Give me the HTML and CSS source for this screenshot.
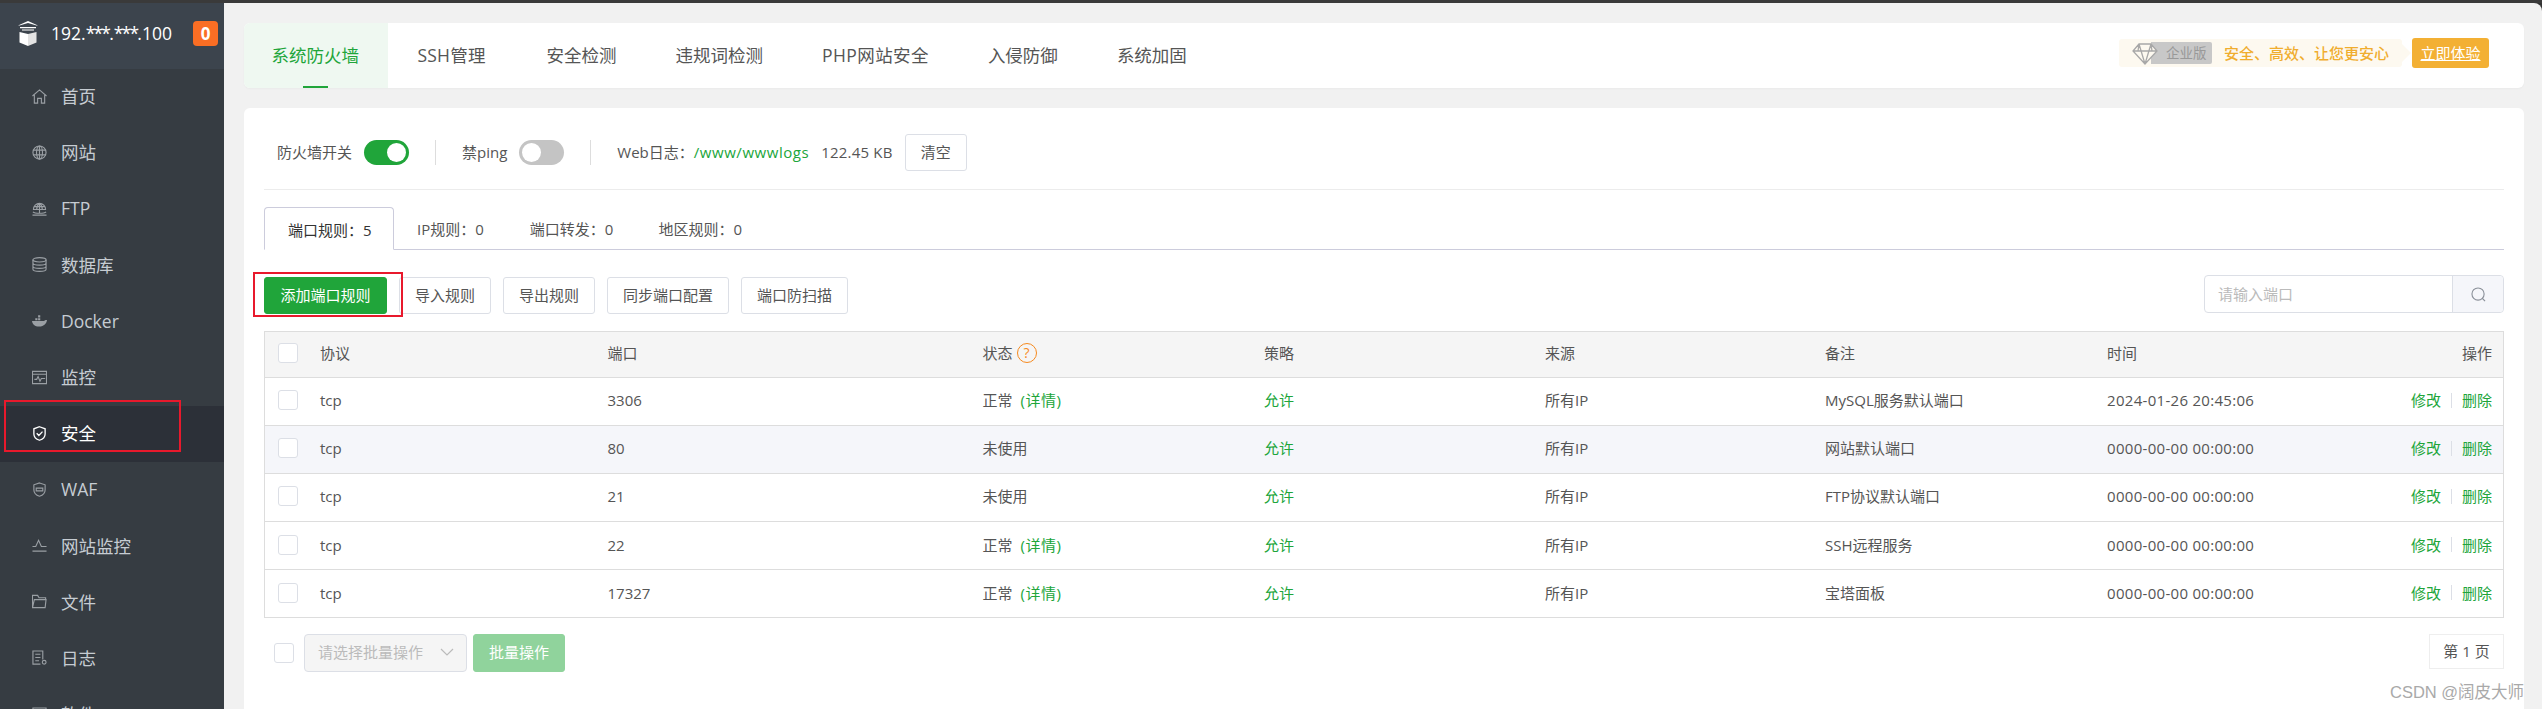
FILE: index.html
```html
<!DOCTYPE html>
<html lang="zh-CN">
<head>
  <meta charset="UTF-8" />
  <title>宝塔面板 - 安全</title>
  <link rel="stylesheet" href="styles.css">
</head>
<body>
  <div class="topbar"></div>
  <div class="layout">
    <aside class="sidebar">
      <div class="side-head">
        <svg class="logo" viewBox="0 0 22 25">
          <path d="M11 0 1 4.500h1.500L11 2l8.500 2.500H21zM3 6h16v1.300H3zM5 8.500h12v1H5z" fill="#fff"/>
          <path d="M2.500 11 11 13v12l-8.500-3.500z" fill="#fff"/>
          <path d="M19.500 11 11 13v12l8.500-3.500z" fill="#e3e3e3"/>
        </svg>
        <span class="ip">192.<span class="stars">***</span>.<span class="stars">***</span>.100</span>
        <span class="badge">0</span>
      </div>
      <nav class="menu">
        <a class="menu-item">
          <svg class="ico" viewBox="0 0 16 16"><path d="M.5 7.500 8 1l7.500 6.500M2.500 6.500V15h3.500v-5h4v5h3.500V6.500"/></svg>
          <span>首页</span>
        </a>
        <a class="menu-item">
          <svg class="ico" viewBox="0 0 16 16"><circle cx="8" cy="8" r="7"/><ellipse cx="8" cy="8" rx="3.200" ry="7"/><path d="M1 5.500h14M1 10.500h14M8 1v14"/></svg>
          <span>网站</span>
        </a>
        <a class="menu-item">
          <svg class="ico" viewBox="0 0 16 16"><path d="M1.500 9a6.500 6.500 0 1 1 13 0M1 9h14M8 2.500V13M5 9c0-3 1-5 3-6.500 2 1.500 3 3.500 3 6.500M2 6h12M1 11.500c1 1 2.500 1.500 7 1.500s6-.500 7-1.500M.5 15h15"/></svg>
          <span>FTP</span>
        </a>
        <a class="menu-item">
          <svg class="ico" viewBox="0 0 16 16"><ellipse cx="8" cy="3" rx="7" ry="2.300"/><path d="M1 3v10c0 1.300 3 2.300 7 2.300s7-1 7-2.300V3M1 6.400c0 1.300 3 2.300 7 2.300s7-1 7-2.300M1 9.800c0 1.300 3 2.300 7 2.300s7-1 7-2.300"/></svg>
          <span>数据库</span>
        </a>
        <a class="menu-item">
          <svg class="ico ico-fill" viewBox="0 0 16 16"><path d="M0 8.500h13c.500-1 1.500-1.300 3-1-.500 3.500-3 7-8.500 7C3 14.500.500 12 0 8.500z"/><path d="M3.500 5.500h2.300v2.300H3.500zM6.500 5.500h2.300v2.300H6.500zM6.500 2.500h2.300v2.300H6.500z"/></svg>
          <span>Docker</span>
        </a>
        <a class="menu-item">
          <svg class="ico" viewBox="0 0 16 16"><path d="M.5 1.500h15v13H.5zM.5 4.500h15M2.500 10h2.500l1.500-3 2 5 1.500-3h4"/></svg>
          <span>监控</span>
        </a>
        <a class="menu-item active">
          <svg class="ico" viewBox="0 0 16 16"><path d="M8 .8 14 3v5.500c0 3.500-3 5.700-6 6.700-3-1-6-3.200-6-6.700V3zM5 7.800l2.300 2.300L11.200 6"/></svg>
          <span>安全</span>
        </a>
        <a class="menu-item">
          <svg class="ico" viewBox="0 0 16 16"><path d="M8 1 14 3v5.500c0 3.500-3 5.700-6 6.700-3-1-6-3.200-6-6.700V3zM4.500 6.500h7v3h-7z"/></svg>
          <span>WAF</span>
        </a>
        <a class="menu-item">
          <svg class="ico" viewBox="0 0 16 16"><path d="M.5 9H4l3-6.500L10 9h5.500M.5 14h15"/></svg>
          <span>网站监控</span>
        </a>
        <a class="menu-item">
          <svg class="ico" viewBox="0 0 16 16"><path d="M.5 14.500V1.500H6l1.500 2.500h7v2M.5 14.500h13.500l1-8.500H2.500z"/></svg>
          <span>文件</span>
        </a>
        <a class="menu-item">
          <svg class="ico" viewBox="0 0 16 16"><path d="M11.500 10V1H1v14h8M3.500 4.500h5.500M3.500 8h5.500M3.500 11.500h4"/><circle cx="13" cy="13" r="2"/></svg>
          <span>日志</span>
        </a>
        <a class="menu-item">
          <svg class="ico" viewBox="0 0 16 16"><path d="M1 1h14v14H1z"/></svg>
          <span>软件</span>
        </a>
      </nav>
    </aside>

    <main class="main">
      <div class="card top-tabs">
        <a class="top-tab on">系统防火墙</a>
        <a class="top-tab tab-ssh">SSH管理</a>
        <a class="top-tab">安全检测</a>
        <a class="top-tab">违规词检测</a>
        <a class="top-tab tab-php">PHP网站安全</a>
        <a class="top-tab">入侵防御</a>
        <a class="top-tab">系统加固</a>
        <div class="promo">
          <div class="promo-bar">
            <svg class="diamond" viewBox="0 0 26 22"><path d="M7 1h12l6 7-12 13L1 8zM1 8h24M7 1l6 20 6-20M7 1l-1 7M19 1l1 7" fill="#fdf9f0"/></svg>
            <span class="ent">企业版</span>
            <span class="promo-text">安全、高效、让您更安心</span>
          </div>
          <a class="promo-btn">立即体验</a>
        </div>
      </div>

      <div class="card content">
        <div class="fw-row">
          <span>防火墙开关</span>
          <span class="switch on"></span>
          <i class="sep"></i>
          <span>禁ping</span>
          <span class="switch"></span>
          <i class="sep"></i>
          <span class="log-label">Web日志：<a class="link log-path">/www/wwwlogs</a></span>
          <span class="log-size">122.45 KB</span>
          <button class="btn">清空</button>
        </div>

        <div class="sub-tabs">
          <a class="sub-tab on">端口规则：5</a>
          <a class="sub-tab">IP规则：0</a>
          <a class="sub-tab">端口转发：0</a>
          <a class="sub-tab">地区规则：0</a>
        </div>

        <div class="toolbar">
          <button class="btn btn-green">添加端口规则</button>
          <button class="btn">导入规则</button>
          <button class="btn">导出规则</button>
          <button class="btn">同步端口配置</button>
          <button class="btn">端口防扫描</button>
          <div class="search">
            <span class="search-input">请输入端口</span>
            <span class="search-btn">
              <svg viewBox="0 0 16 16" width="15" height="15"><circle cx="7.500" cy="7.500" r="6.500"/><path d="m12 12 3 3"/></svg>
            </span>
          </div>
        </div>

        <div class="table">
          <div class="row head">
            <span class="check"></span>
            <span>协议</span>
            <span>端口</span>
            <span class="status-head">状态<i class="help">?</i></span>
            <span>策略</span>
            <span>来源</span>
            <span>备注</span>
            <span>时间</span>
            <span class="ops">操作</span>
          </div>
          <div class="row">
            <span class="check"></span><span>tcp</span><span>3306</span>
            <span>正常<a class="link detail">(详情)</a></span>
            <span class="link">允许</span><span>所有IP</span><span>MySQL服务默认端口</span>
            <span class="time">2024-01-26 20:45:06</span>
            <span class="ops"><a class="link">修改</a><i class="pipe"></i><a class="link">删除</a></span>
          </div>
          <div class="row hover">
            <span class="check"></span><span>tcp</span><span>80</span>
            <span>未使用</span>
            <span class="link">允许</span><span>所有IP</span><span>网站默认端口</span>
            <span class="time">0000-00-00 00:00:00</span>
            <span class="ops"><a class="link">修改</a><i class="pipe"></i><a class="link">删除</a></span>
          </div>
          <div class="row">
            <span class="check"></span><span>tcp</span><span>21</span>
            <span>未使用</span>
            <span class="link">允许</span><span>所有IP</span><span>FTP协议默认端口</span>
            <span class="time">0000-00-00 00:00:00</span>
            <span class="ops"><a class="link">修改</a><i class="pipe"></i><a class="link">删除</a></span>
          </div>
          <div class="row">
            <span class="check"></span><span>tcp</span><span>22</span>
            <span>正常<a class="link detail">(详情)</a></span>
            <span class="link">允许</span><span>所有IP</span><span>SSH远程服务</span>
            <span class="time">0000-00-00 00:00:00</span>
            <span class="ops"><a class="link">修改</a><i class="pipe"></i><a class="link">删除</a></span>
          </div>
          <div class="row">
            <span class="check"></span><span>tcp</span><span>17327</span>
            <span>正常<a class="link detail">(详情)</a></span>
            <span class="link">允许</span><span>所有IP</span><span>宝塔面板</span>
            <span class="time">0000-00-00 00:00:00</span>
            <span class="ops"><a class="link">修改</a><i class="pipe"></i><a class="link">删除</a></span>
          </div>
        </div>

        <div class="table-foot">
          <span class="check"></span>
          <div class="batch-select">
            <span>请选择批量操作</span>
            <svg viewBox="0 0 14 8" width="14" height="8"><path d="m1 1 6 6 6-6"/></svg>
          </div>
          <button class="btn btn-batch">批量操作</button>
          <span class="pager">第 1 页</span>
        </div>
      </div>
    </main>
  </div>

  <div class="mark mark-menu"></div>
  <div class="mark mark-add"></div>
  <div class="watermark">CSDN @阔皮大师</div>
</body>
</html>
```

FILE: styles.css
```css
* { box-sizing: border-box; }
html, body { margin: 0; padding: 0; height: 709px; overflow: hidden; }
body { position: relative; background: #333; color: #555; font: 15px/20px "Open Sans", "Noto Sans CJK SC", sans-serif; }
a { text-decoration: none; }
button { font: inherit; }

.topbar { height: 3px; background: #3a3a3a; }
.layout { display: flex; height: 706px; }

/* sidebar */
.sidebar { width: 224px; flex: none; background: #363c42; overflow: hidden; }
.side-head { height: 66px; background: #3c444d; display: flex; align-items: center; padding: 0 6px 0 17px; }
.side-head .logo { width: 22px; height: 25px; margin-top: -6px; }
.ip { margin-left: 12px; margin-top: -6px; color: #fff; font-size: 17.5px; }
.stars { letter-spacing: -1.800px; }
.badge { margin-left: auto; margin-top: -6px; width: 25px; height: 25px; border-radius: 4px; background: #fa6e24; color: #fff; font-weight: 700; font-size: 17px; line-height: 25px; text-align: center; }
.menu-item { display: flex; align-items: center; height: 56.2px; padding: 0 0 2px 32px; color: #c6ccd2; font-size: 17.5px; }
.menu-item.active { background: #2c3038; color: #fff; }
.ico { width: 15px; height: 15px; margin-right: 14px; flex: none; fill: none; stroke: #9a9fa4; stroke-width: 1.2; }
.ico-fill { fill: #9a9fa4; stroke: none; }
.active .ico { stroke: #fff; stroke-width: 1.4; }

/* main */
.main { flex: 1; min-width: 0; background: #f1f1f1; padding: 20px 18px 0 20px; border-top-right-radius: 8px; }
.card { background: #fff; border-radius: 6px; }
.top-tabs { display: flex; align-items: stretch; height: 65px; font-size: 17.5px; box-shadow: 0 1px 2px rgba(0,0,0,.03); }
.top-tab { display: flex; align-items: center; padding: 0 29.5px 2px; color: #555; position: relative; white-space: nowrap; }
.tab-ssh { letter-spacing: .2px; padding-right: 31.5px; }
.tab-php { letter-spacing: .4px; }
.top-tab.on { width: 144px; padding: 0 0 2px 27.5px; background: #eff8f1; color: #20a53a; border-radius: 6px 0 0 6px; }
.top-tab.on::after { content: ""; position: absolute; left: 59px; bottom: 0; width: 25px; height: 2px; background: #20a53a; }

.promo { margin-left: auto; margin-right: 35px; display: flex; align-items: flex-start; padding-top: 15px; }
.promo-bar { position: relative; display: flex; align-items: center; width: 283px; height: 28px; margin-top: 1px; padding-left: 13px; background: #fdf9f0; border-radius: 3px; }
.promo-bar::after { content: ""; position: absolute; right: -9px; top: 5px; border-left: 9px solid #fdf9f0; border-top: 9px solid transparent; border-bottom: 9px solid transparent; }
.diamond { position: relative; z-index: 1; width: 26px; height: 22px; fill: none; stroke: #a8a8a8; stroke-width: 1.3; margin-top: 2px; }
.ent { width: 61px; height: 22px; margin-left: -7px; padding-left: 15px; background: #c8c8c8; color: #999; font-size: 13.5px; line-height: 22px; border-radius: 0 2px 2px 0; }
.promo-text { margin-left: 12px; color: #f0ad2e; font-size: 15px; font-weight: 500; white-space: nowrap; }
.promo-btn { margin-left: 10px; width: 77px; height: 30px; line-height: 30px; text-align: center; background: #f3b034; color: #fff; font-size: 15px; text-decoration: underline; border-radius: 3px; }

.content { margin-top: 20px; height: 620px; padding: 0 20px; }
.fw-row { display: flex; align-items: center; height: 82px; padding: 26px 0 19px 13px; border-bottom: 1px solid #ececec; }
.switch { position: relative; width: 45px; height: 25px; margin-left: 12px; border-radius: 13px; background: #c4c4c4; }
.switch::after { content: ""; position: absolute; left: 3px; top: 3px; width: 19px; height: 19px; border-radius: 50%; background: #fff; }
.switch.on { background: #20a53a; }
.switch.on::after { left: 23px; }
.sep { width: 1px; height: 25px; margin: 0 26px; background: #ddd; }
.log-label { white-space: nowrap; }
.log-path { letter-spacing: .55px; }
.log-size { margin-left: 12px; letter-spacing: .2px; }
.link { color: #20a53a; }
.fw-row .btn { margin-left: 12px; width: 62px; }

.btn { height: 37px; padding: 0 15px; background: #fff; border: 1px solid #dcdfe6; border-radius: 3px; color: #555; white-space: nowrap; }
.btn-green { background: #20a53a; border-color: #20a53a; color: #fff; }

.sub-tabs { display: flex; height: 43px; margin-top: 17px; border-bottom: 1px solid #ccccdc; }
.sub-tab { height: 43px; padding: 12px 23px 0 0; margin-right: 22px; color: #555; white-space: nowrap; }
.sub-tab.on { width: 130px; margin-right: 23px; padding-left: 23px; padding-right: 0; background: #fff; border: 1px solid #ccccdc; border-bottom-color: #fff; border-radius: 4px 4px 0 0; color: #333; }
.sub-tab:nth-child(2) { margin-right: 23px; }

.toolbar { display: flex; align-items: center; gap: 12px; height: 38px; margin-top: 26px; }
.toolbar .btn-green { width: 122px; }
.toolbar .btn { padding: 0; width: 92px; }
.toolbar .btn:nth-child(1) { width: 123px; }
.toolbar .btn:nth-child(4) { width: 122px; }
.toolbar .btn:nth-child(5) { width: 107px; }
.search { display: flex; margin-left: auto; width: 300px; height: 38px; margin-top: -2px; border: 1px solid #dcdfe6; border-radius: 4px; }
.search-input { flex: 1; padding: 8px 0 0 13px; color: #bbb; }
.search-btn { width: 51px; display: flex; align-items: center; justify-content: center; background: #f5f6fa; border-left: 1px solid #dcdfe6; border-radius: 0 4px 4px 0; }
.search-btn svg { fill: none; stroke: #8a9099; stroke-width: 1.2; }

.table { margin-top: 17px; border: 1px solid #dddddd; border-bottom-width: 0; }
.row { display: grid; grid-template-columns: 55px 287.500px 375px 281.500px 281px 280px 282px 1fr 150px; align-items: center; height: 48.200px; padding: 0 11px 2px 0; border-bottom: 1px solid #dddddd; white-space: nowrap; }
.row.head { height: 45.500px; background: #f5f5f5; }
.row.hover { background: #f5f6fa; }
.time { letter-spacing: .3px; }
.check { width: 20px; height: 20px; margin-left: 13px; background: #fff; border: 1px solid #dcdfe6; border-radius: 3px; }
.ops { display: flex; justify-content: flex-end; align-items: center; }
.pipe { width: 1px; height: 15px; margin: 0 10px; background: #dcdfe6; }
.detail { margin-left: 8px; letter-spacing: .5px; }
.status-head { display: flex; align-items: center; }
.help { width: 20px; height: 20px; margin-left: 4px; border: 1px solid #f58a1f; border-radius: 50%; color: #f58a1f; font-style: normal; font-size: 14px; line-height: 18px; text-align: center; }

.table-foot { display: flex; align-items: center; height: 38px; margin-top: 16px; }
.table-foot .check { margin-left: 10px; }
.batch-select { display: flex; align-items: center; justify-content: space-between; width: 163px; height: 38px; margin-left: 10px; padding: 0 12px 2px 13px; background: #f5f5f5; border: 1px solid #dcdfe6; border-radius: 4px; color: #bbb; }
.batch-select svg { fill: none; stroke: #bbb; stroke-width: 1.2; }
.btn-batch { width: 92px; height: 38px; margin-left: 6px; padding: 0 0 2px; background: #90d39c; border-color: #90d39c; color: #fff; }
.pager { margin-left: auto; width: 75px; height: 35px; margin-top: -3px; border: 1px solid #eeeeee; line-height: 33px; text-align: center; color: #555; }

/* annotations drawn over the screenshot */
.mark { position: absolute; border: 2px solid #e8192c; pointer-events: none; }
.mark-menu { left: 4px; top: 400px; width: 177px; height: 52px; }
.mark-add { left: 253px; top: 272px; width: 150px; height: 45px; }
.watermark { position: absolute; left: 2390px; top: 681px; color: #a9a9a9; font: 16.500px/22px "Liberation Sans", "Noto Sans CJK SC", sans-serif; white-space: nowrap; }
```
